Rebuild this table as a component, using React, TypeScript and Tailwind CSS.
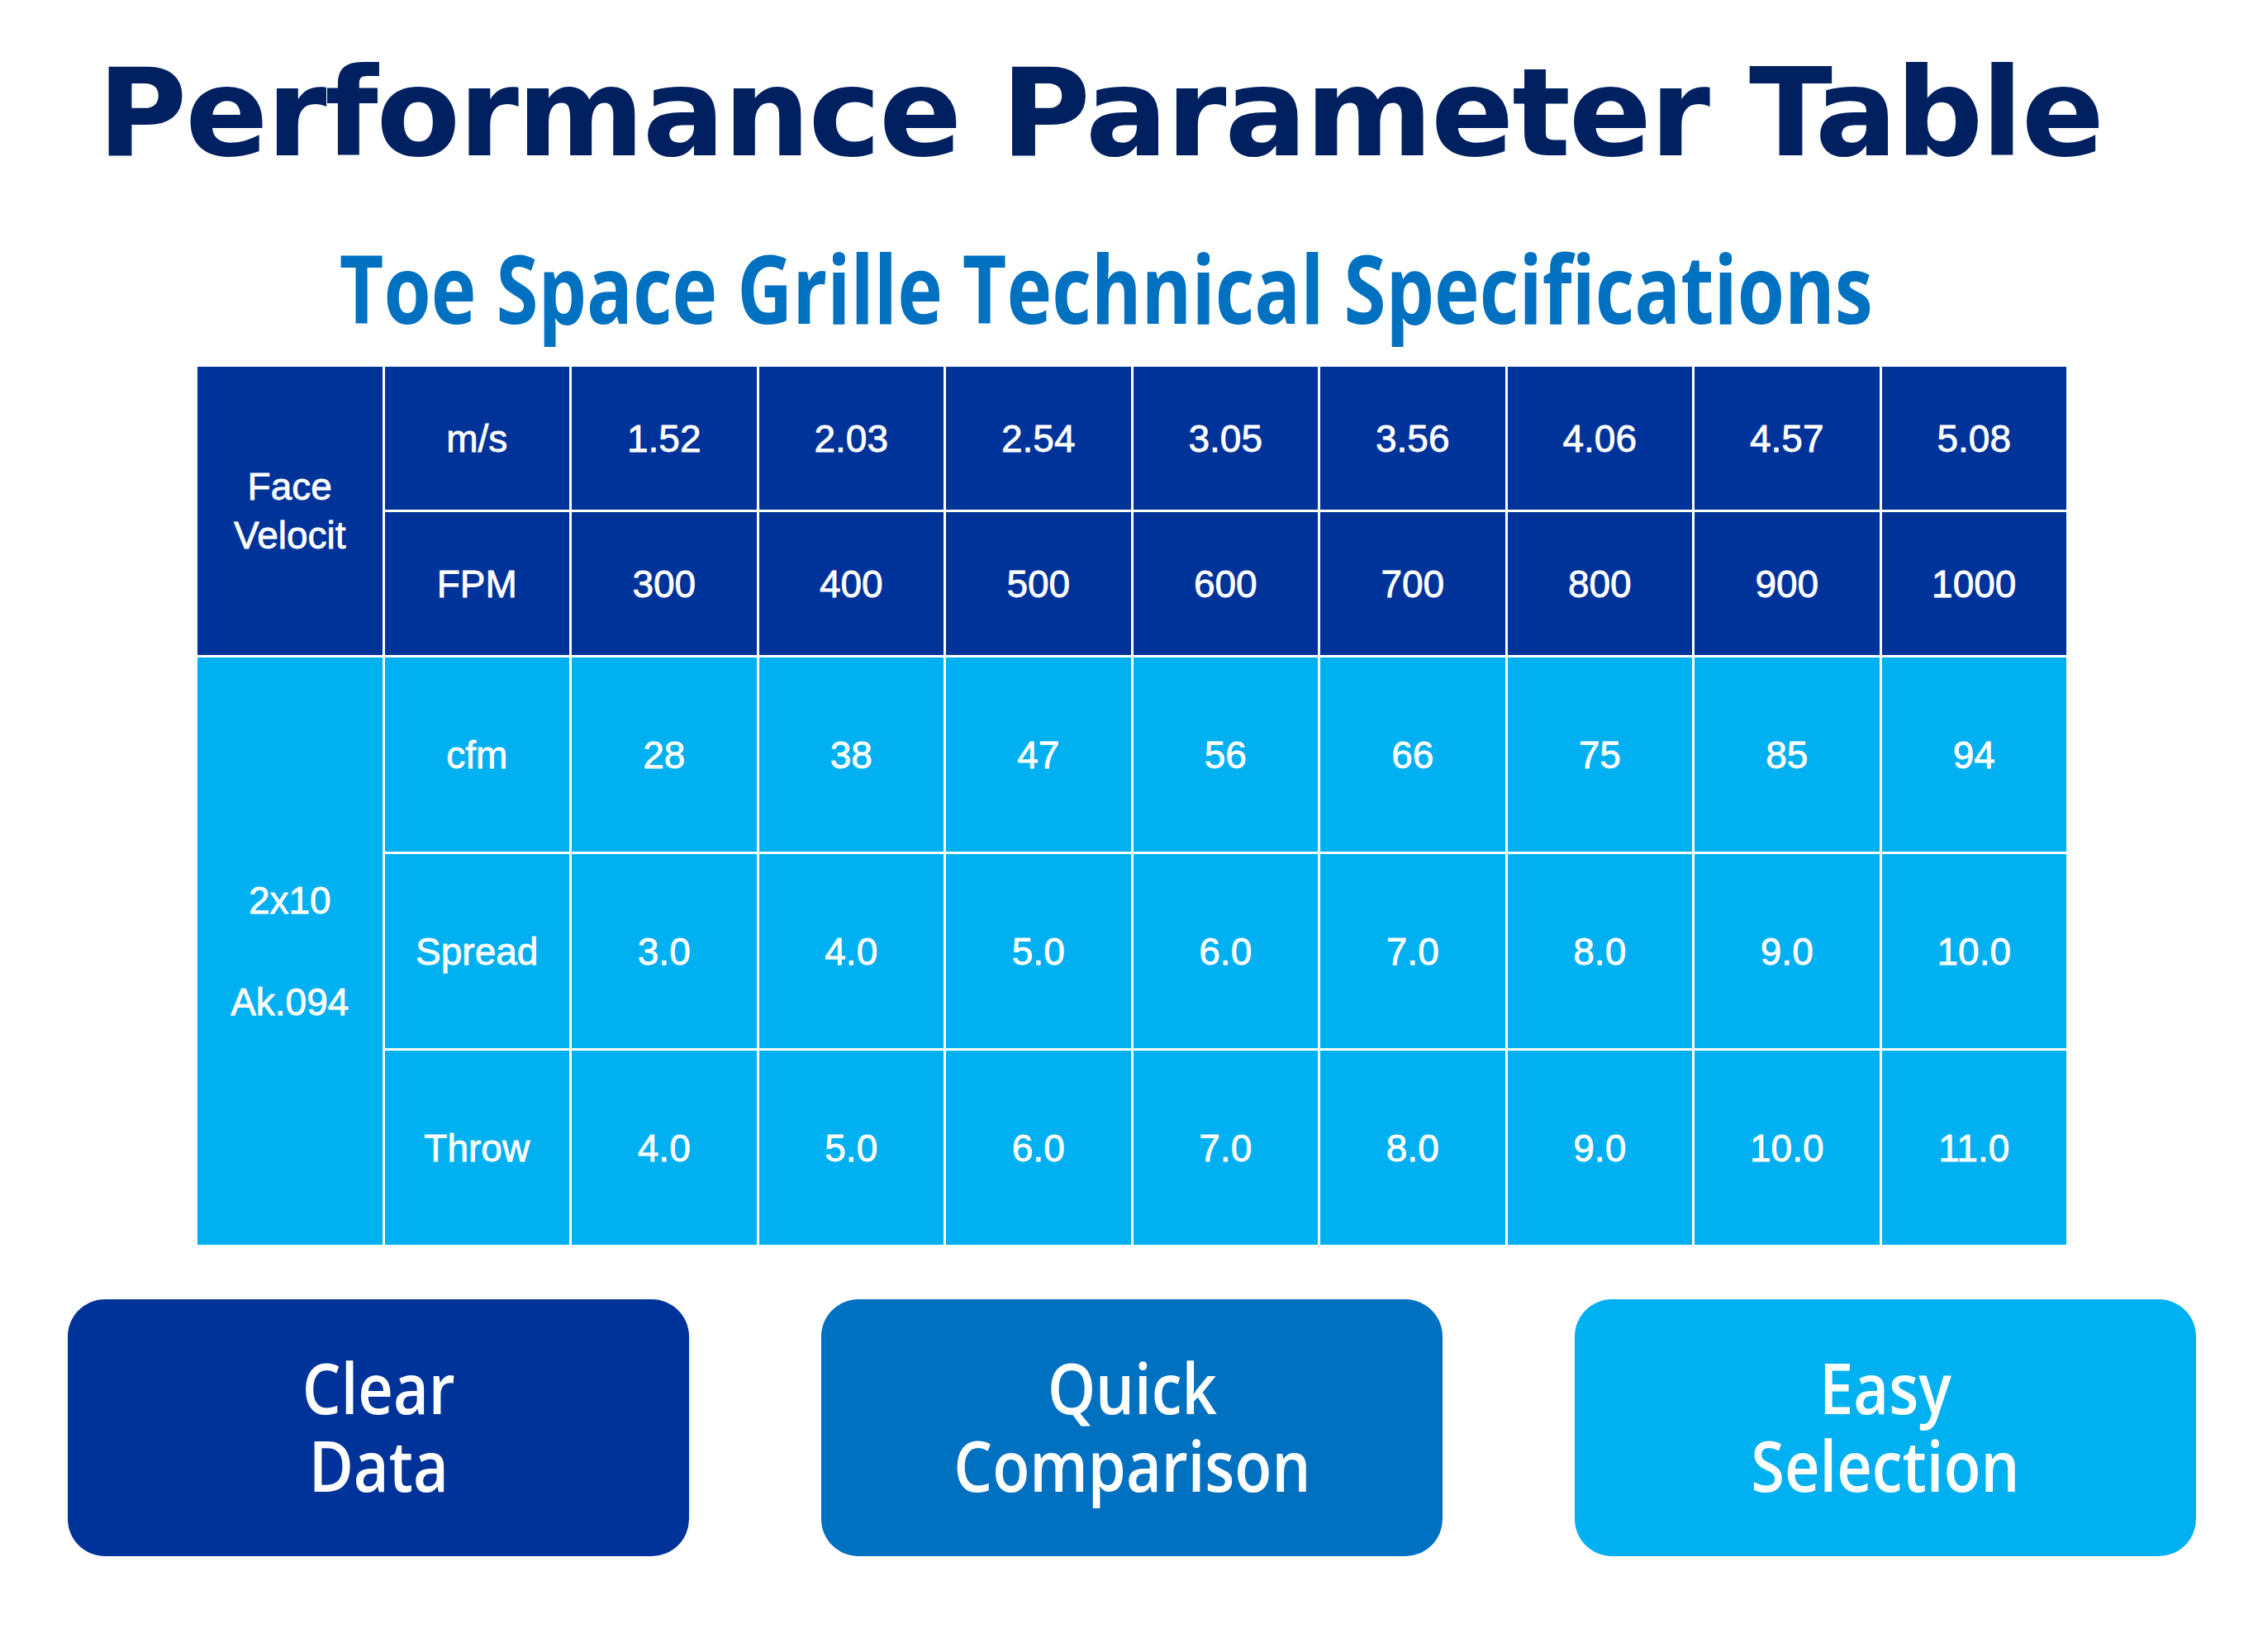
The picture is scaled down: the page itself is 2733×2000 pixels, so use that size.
import React from "react";

const speeds = ["1.52", "2.03", "2.54", "3.05", "3.56", "4.06", "4.57", "5.08"];
const fpm = ["300", "400", "500", "600", "700", "800", "900", "1000"];
const rows = [
  { label: "cfm", values: ["28", "38", "47", "56", "66", "75", "85", "94"] },
  { label: "Spread", values: ["3.0", "4.0", "5.0", "6.0", "7.0", "8.0", "9.0", "10.0"] },
  { label: "Throw", values: ["4.0", "5.0", "6.0", "7.0", "8.0", "9.0", "10.0", "11.0"] },
];

const buttons = [
  { top: "Clear", bottom: "Data", color: "bg-[#003399]" },
  { top: "Quick", bottom: "Comparison", color: "bg-[#0070c0]" },
  { top: "Easy", bottom: "Selection", color: "bg-[#00b0f0]" },
];

function Cell({ children, dark }: { children: React.ReactNode; dark?: boolean }) {
  return (
    <div
      className={`${dark ? "bg-[#003399]" : "bg-[#00b0f0]"} flex items-center justify-center text-white`}
    >
      {children}
    </div>
  );
}

export default function App() {
  return (
    <div className="w-[2733px] h-[2000px] bg-white flex flex-col overflow-hidden">
      <h1 className="mt-[63px] pl-[118px] text-[148px] leading-none font-bold tracking-[-2.2px] text-[#002060] font-['DejaVu_Sans',sans-serif] whitespace-nowrap">
        Performance Parameter Table
      </h1>

      <div className="mt-[79px] flex justify-center pr-[56px]">
        <h2 className="text-[115px] leading-none font-bold text-[#0070c0] font-['Open_Sans',sans-serif] whitespace-nowrap scale-x-[0.805]">
          Toe Space Grille Technical Specifications
        </h2>
      </div>

      {/* spec table: 10 equal columns, white hairlines via the grid gap */}
      <div className="mt-[39px] ml-[239px] w-[2262px] grid grid-cols-10 grid-rows-[173px_173px_235px_235px_235px] gap-[3px] bg-white font-['Liberation_Sans',Arial,sans-serif] text-[46px] leading-none [-webkit-text-stroke:0.8px_white]">
        <div className="row-span-2 bg-[#003399] flex items-center justify-center text-center text-white leading-[59px]">
          <span>
            Face
            <br />
            Velocit
          </span>
        </div>
        <Cell dark>m/s</Cell>
        {speeds.map((s) => (
          <Cell dark key={s}>
            {s}
          </Cell>
        ))}
        <Cell dark>FPM</Cell>
        {fpm.map((s) => (
          <Cell dark key={s}>
            {s}
          </Cell>
        ))}
        <div className="row-span-3 col-start-1 row-start-3 bg-[#00b0f0] flex flex-col items-center justify-center gap-[77px] text-white">
          <span>2x10</span>
          <span>Ak.094</span>
        </div>
        {rows.map((r) => (
          <React.Fragment key={r.label}>
            <Cell>{r.label}</Cell>
            {r.values.map((v, i) => (
              <Cell key={i}>{v}</Cell>
            ))}
          </React.Fragment>
        ))}
      </div>

      <div className="mt-[66px] pl-[82px] flex gap-[160px]">
        {buttons.map((b) => (
          <div
            key={b.top}
            className={`${b.color} w-[752px] h-[311px] rounded-[45px] flex items-center justify-center pb-[6px]`}
          >
            <span className="text-center text-white font-semibold text-[85px] leading-[94px] font-['Open_Sans',sans-serif] scale-x-[0.87]">
              {b.top}
              <br />
              {b.bottom}
            </span>
          </div>
        ))}
      </div>
    </div>
  );
}
